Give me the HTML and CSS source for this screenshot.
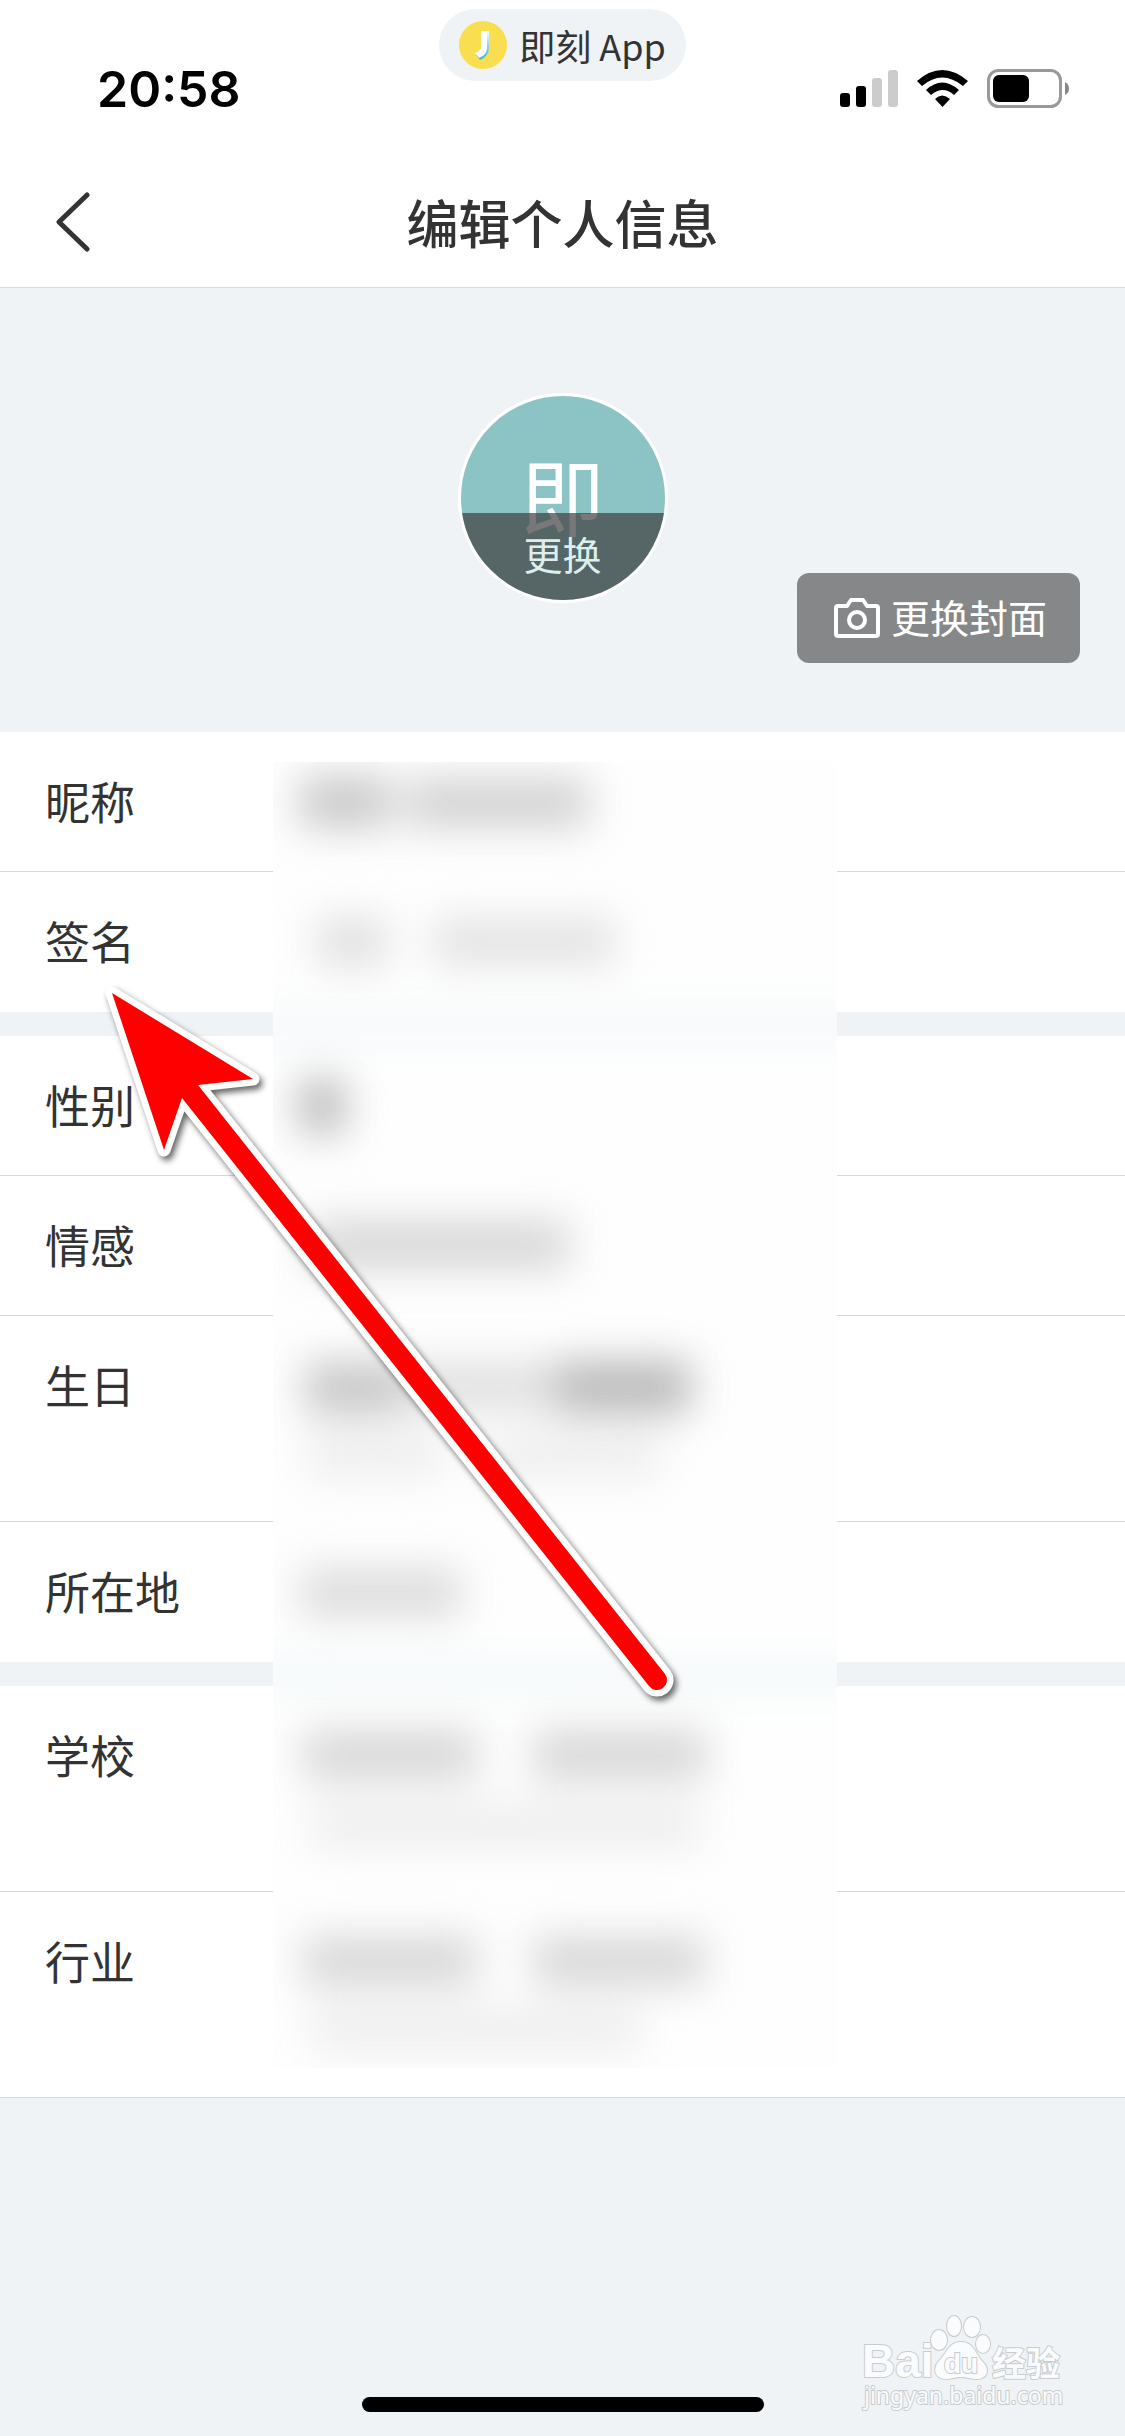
FILE: index.html
```html
<!DOCTYPE html>
<html lang="zh-CN">
<head>
<meta charset="utf-8">
<meta name="viewport" content="width=device-width, initial-scale=1">
<title>编辑个人信息</title>
<link rel="stylesheet" href="styles.css">
</head>
<body>
<div class="status">
  <time class="clock">20:58</time>
  <div class="app-pill">
    <svg class="app-logo" viewBox="0 0 48 48" aria-hidden="true">
      <defs>
        <linearGradient id="edge" x1="0" y1="0" x2="0" y2="1"><stop offset="0" stop-color="#fff"/><stop offset=".5" stop-color="#8fd6ea"/><stop offset="1" stop-color="#3fb0d8"/></linearGradient>
      </defs>
      <circle cx="24" cy="24" r="24" fill="#f9de4f"/>
      <path d="M22 10h8v17q0 8-9 12l-4-5q5-2 5-8z" fill="url(#edge)"/>
      <path d="M22 10h6v17q0 7-8 10l-4-5q6-2 6-6z" fill="#fff"/>
    </svg>
    <span>即刻 App</span>
  </div>
  <svg class="indicators" viewBox="0 0 230 40" aria-hidden="true">
    <rect x="0" y="24" width="10" height="14" rx="3"/>
    <rect x="16" y="17" width="10" height="21" rx="3"/>
    <rect x="32" y="9" width="10" height="29" rx="3" fill="#ccc"/>
    <rect x="48" y="1" width="10" height="37" rx="3" fill="#ccc"/>
    <path d="M77 12Q102-10 128 12l-5 5Q102 0 82 17zM86 21q16-15 33 0l-5 5q-11-10-23 0zM95 30q7-7 15 0l-7.500 8z"/>
    <rect x="148.500" y="1.500" width="72" height="36" rx="10" fill="none" stroke="#999" stroke-width="3"/>
    <rect x="153" y="6" width="36" height="27" rx="6"/>
    <path d="M225 13q4 2 4 6.500t-4 6.500z" fill="#888"/>
  </svg>
</div>
<header class="nav">
  <button class="back" type="button" aria-label="返回">
    <svg viewBox="0 0 36 60" aria-hidden="true"><path d="M32 3L4 30l28 27"/></svg>
  </button>
  <h1 class="title">编辑个人信息</h1>
</header>
<main class="page">
  <section class="cover">
    <button class="avatar" type="button"><span class="initial">即</span><span class="swap">更换</span></button>
    <button class="cover-btn" type="button">
      <svg viewBox="0 0 46 40" aria-hidden="true"><path d="M4 8h9l4-6h12l4 6h9q2 0 2 2v26q0 2-2 2H4q-2 0-2-2V10q0-2 2-2z"/><circle cx="23" cy="22" r="8"/></svg>
      更换封面
    </button>
  </section>
  <div class="form">
    <ul class="group">
      <li class="row">昵称</li>
      <li class="row">签名</li>
    </ul>
    <ul class="group">
      <li class="row">性别</li>
      <li class="row">情感</li>
      <li class="row tall">生日</li>
      <li class="row">所在地</li>
    </ul>
    <ul class="group last">
      <li class="row tall">学校</li>
      <li class="row tall">行业</li>
    </ul>
    <svg class="redaction" viewBox="0 0 564 1306" aria-hidden="true">
      <defs>
        <filter id="soft" filterUnits="userSpaceOnUse" x="0" y="0" width="564" height="1306" color-interpolation-filters="sRGB"><feGaussianBlur stdDeviation="20"/></filter>
        <filter id="haze" x="-10%" y="-200%" width="120%" height="500%"><feGaussianBlur stdDeviation="0 16"/></filter>
      </defs>
      <rect width="564" height="1306" fill="#fefefe"/>
      <g fill="#f7fafb" filter="url(#haze)">
        <rect x="-80" y="240" width="724" height="48"/>
        <rect x="-80" y="890" width="724" height="48"/>
      </g>
      <g filter="url(#soft)" opacity=".84">
        <g fill="#d0d0d0">
          <rect x="26" y="14" width="92" height="52" fill="#c0c0c0"/>
          <rect x="134" y="16" width="182" height="50" fill="#cacaca"/>
          <rect x="44" y="156" width="70" height="48" fill="#dadada"/>
          <rect x="160" y="156" width="182" height="48" fill="#dedede"/>
          <rect x="26" y="316" width="46" height="56" fill="#aeaeae"/>
          <rect x="36" y="458" width="260" height="50"/>
          <rect x="32" y="600" width="98" height="52" fill="#bcbcbc"/>
          <rect x="130" y="600" width="154" height="48" fill="#dadada"/>
          <rect x="284" y="598" width="134" height="54" fill="#aeaeae"/>
          <rect x="28" y="806" width="160" height="50" fill="#d6d6d6"/>
          <rect x="30" y="968" width="174" height="50"/>
          <rect x="260" y="968" width="174" height="50"/>
          <rect x="30" y="1174" width="174" height="50"/>
          <rect x="260" y="1174" width="172" height="50"/>
        </g>
        <g fill="#ebebeb">
          <rect x="34" y="672" width="136" height="44"/>
          <rect x="212" y="672" width="176" height="44"/>
          <rect x="38" y="1042" width="390" height="44"/>
          <rect x="38" y="1246" width="330" height="44"/>
        </g>
      </g>
    </svg>
    <svg class="pointer" viewBox="0 0 590 730" aria-hidden="true">
      <path d="M22 23L163 109 108 115 575 704A10 10 0 0 1 559 716L92 128 74 180z" fill="none" stroke="#fff" stroke-width="13" stroke-linejoin="round"/>
      <path d="M22 23L163 109 108 115 575 704A10 10 0 0 1 559 716L92 128 74 180z" fill="#f00"/>
    </svg>
  </div>
</main>
<footer class="bottom">
  <div class="home-bar"></div>
  <svg class="watermark" viewBox="0 0 210 105" role="img" aria-label="Baidu 经验">
    <g fill="#fafbfc" stroke="#c8cccf" stroke-width="2" paint-order="stroke">
      <text x="2" y="66" class="wm-brand">Bai</text>
      <ellipse cx="79" cy="29" rx="8" ry="10"/>
      <ellipse cx="94" cy="15" rx="7" ry="10"/>
      <ellipse cx="112" cy="16" rx="8" ry="10"/>
      <ellipse cx="123" cy="33" rx="7" ry="9"/>
      <path d="M101 31c13 0 14 12 22 20 8 9 3 17-6 17-7 0-10-2-16-2s-9 2-15 2c-11 0-14-10-7-18 8-8 10-19 22-19z"/>
      <text x="84" y="62" class="wm-du">du</text>
      <text x="132" y="65" class="wm-cn">经验</text>
      <text x="4" y="93" class="wm-url">jingyan.baidu.com</text>
    </g>
  </svg>
</footer>
</body>
</html>
```
FILE: styles.css
```css
* { box-sizing: border-box; }

body {
  margin: 0;
  min-height: 100vh;
  display: flex;
  flex-direction: column;
  background: #eff3f6;
  color: #333;
  font-family: "Noto Sans", "Noto Sans CJK SC", sans-serif;
}

button {
  border: 0;
  padding: 0;
  background: none;
  color: inherit;
  font: inherit;
}

.status {
  height: 156px;
  padding: 0 55px 0 97px;
  display: grid;
  grid-template-columns: 1fr auto 1fr;
  align-items: start;
  background: #fff;
}

.clock {
  margin-top: 57px;
  font: 600 50px/64px Inter, sans-serif;
  color: #000;
}

.app-pill {
  height: 72px;
  margin-top: 9px;
  margin-right: 42px;
  padding: 0 20px;
  display: flex;
  align-items: center;
  gap: 12px;
  border-radius: 36px;
  background: #eff3f6;
  font: 36px/48px "Noto Sans CJK SC", sans-serif;
  white-space: nowrap;
}

.app-logo { width: 48px; height: 48px; }

.indicators {
  width: 230px;
  height: 40px;
  margin-top: 69px;
  justify-self: end;
}

.nav {
  height: 132px;
  padding: 0 55px;
  display: grid;
  grid-template-columns: 1fr auto 1fr;
  align-items: center;
  background: #fff;
  border-bottom: 1px solid #d8dadc;
}

.back { justify-self: start; height: 60px; }
.back svg { display: block; width: 36px; height: 60px; }
.back path { fill: none; stroke: #333; stroke-width: 5; stroke-linecap: round; stroke-linejoin: round; }

.title {
  margin: 0;
  font: 500 52px/70px "Noto Sans CJK SC", sans-serif;
}

.cover {
  position: relative;
  height: 444px;
  padding-top: 105px;
  display: flex;
  justify-content: center;
  align-items: flex-start;
}

.avatar {
  position: relative;
  width: 210px;
  height: 210px;
  overflow: hidden;
  border: 3px solid #fff;
  border-radius: 50%;
  background: #8cc3c4;
  color: #fff;
}

.initial { display: block; font-size: 84px; line-height: 120px; }

.swap {
  position: absolute;
  inset: 117px 0 0;
  padding-top: 14px;
  background: rgba(63, 63, 63, .7);
  color: #dcefee;
  font-size: 39px;
  line-height: 56px;
}

.cover-btn {
  position: absolute;
  right: 45px;
  bottom: 69px;
  height: 90px;
  padding: 0 33px 0 37px;
  display: flex;
  align-items: center;
  gap: 11px;
  border-radius: 12px;
  background: #868789;
  color: #fff;
  font-size: 39px;
  line-height: 56px;
}

.cover-btn svg { width: 46px; height: 40px; fill: none; stroke: #fff; stroke-width: 4; stroke-linejoin: round; }

.form { position: relative; }

.group {
  list-style: none;
  margin: 0 0 24px;
  padding: 0;
  background: #fff;
}

.group.last { margin: 0; }

.row {
  height: 140px;
  padding: 37px 45px 0;
  border-bottom: 1px solid #d6d7d9;
  font-size: 45px;
  line-height: 68px;
}

.row.tall { height: 206px; }
.group:not(.last) .row:last-child { border-bottom: 0; }

.redaction {
  position: absolute;
  left: 273px;
  top: 30px;
  width: 564px;
  height: 1306px;
}

.pointer {
  position: absolute;
  left: 90px;
  top: 238px;
  width: 590px;
  height: 730px;
  overflow: visible;
  filter: drop-shadow(3px 4px 3px rgba(0, 0, 0, .6));
}

.bottom {
  position: relative;
  flex: 1;
  min-height: 180px;
  display: flex;
  justify-content: center;
  align-items: flex-end;
  padding-bottom: 24px;
}

.home-bar {
  width: 402px;
  height: 15px;
  border-radius: 8px;
  background: #000;
}

.watermark {
  position: absolute;
  right: 55px;
  bottom: 20px;
  width: 210px;
  height: 105px;
}

.wm-brand { font: bold 46px "Liberation Sans", sans-serif; }
.wm-du { font: bold 28px "Liberation Sans", sans-serif; }
.wm-cn { font: bold 34px "Noto Sans CJK SC", sans-serif; }
.wm-url { font: 23px "Noto Sans", sans-serif; }
```
